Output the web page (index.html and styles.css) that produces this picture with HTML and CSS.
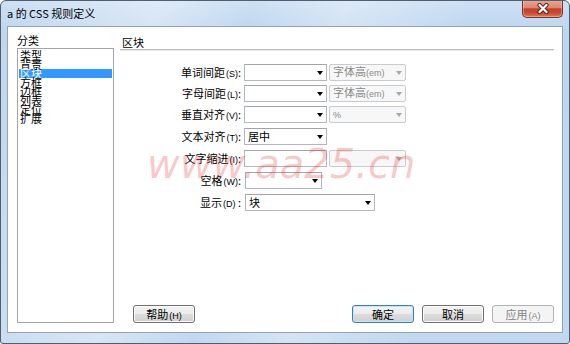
FILE: index.html
```html
<!DOCTYPE html>
<html lang="zh-CN">
<head>
<meta charset="utf-8">
<title>a 的 CSS 规则定义</title>
<link rel="stylesheet" href="styles.css">
</head>
<body>
<div class="window">
  <div class="titlebar">
    <span class="title">a 的 CSS 规则定义</span>
    <button class="close" aria-label="关闭">
      <svg width="12" height="11" viewBox="0 0 12 11"><path d="M2.5 2 L9.5 9 M9.5 2 L2.5 9" stroke="#5e2016" stroke-width="4.2" stroke-linecap="round" fill="none"/><path d="M2.5 2 L9.5 9 M9.5 2 L2.5 9" stroke="#ffffff" stroke-width="2.2" stroke-linecap="round" fill="none"/></svg>
    </button>
  </div>
  <div class="client">
    <div class="sidebar">
      <div class="side-label">分类</div>
      <ul class="category-list">
        <li>类型</li>
        <li>背景</li>
        <li class="active">区块</li>
        <li>方框</li>
        <li>边框</li>
        <li>列表</li>
        <li>定位</li>
        <li>扩展</li>
      </ul>
    </div>
    <div class="panel">
      <div class="panel-title">区块</div>
      <div class="form form-top">
        <div class="lbl">单词间距<small>(S)</small>:</div>
        <div class="fields">
          <div class="combo w83"><span class="val"></span></div>
          <div class="combo disabled w77"><span class="val">字体高<small>(em)</small></span></div>
        </div>
        <div class="lbl">字母间距<small>(L)</small>:</div>
        <div class="fields">
          <div class="combo w83"><span class="val"></span></div>
          <div class="combo disabled w77"><span class="val">字体高<small>(em)</small></span></div>
        </div>
        <div class="lbl">垂直对齐<small>(V)</small>:</div>
        <div class="fields">
          <div class="combo w83"><span class="val"></span></div>
          <div class="combo disabled w77"><span class="val"><small>%</small></span></div>
        </div>
      </div>
      <div class="form form-bottom">
        <div class="lbl">文本对齐<small>(T)</small>:</div>
        <div class="fields">
          <div class="combo w83"><span class="val">居中</span></div>
        </div>
        <div class="lbl">文字缩进<small>(I)</small>:</div>
        <div class="fields">
          <div class="textbox w83"></div>
          <div class="combo disabled w77"><span class="val"></span></div>
        </div>
        <div class="lbl">空格<small>(W)</small>:</div>
        <div class="fields">
          <div class="combo w77 shift"><span class="val"></span></div>
        </div>
        <div class="lbl">显示<small>(D)</small> :</div>
        <div class="fields">
          <div class="combo w130 shift"><span class="val">块</span></div>
        </div>
      </div>
      <div class="buttons">
        <button class="btn">帮助<small>(H)</small></button>
        <div class="btn-group">
          <button class="btn default">确定</button>
          <button class="btn">取消</button>
          <button class="btn" disabled>应用<small>(A)</small></button>
        </div>
      </div>
    </div>
  </div>
  <div class="watermark">www.aa25.cn</div>
</div>
</body>
</html>
```

FILE: styles.css
```css
* { box-sizing: border-box; }

html, body {
  margin: 0;
  padding: 0;
  background: #ffffff;
}

body {
  font-family: "Noto Sans CJK SC", "Liberation Sans", sans-serif;
  font-size: 11px;
  color: #000;
}

small {
  font-family: "Liberation Sans", "Noto Sans CJK SC", sans-serif;
  font-size: 9px;
  margin-left: 1px;
}

.window {
  position: relative;
  width: 570px;
  height: 344px;
  border: 1px solid #4f5e70;
  border-radius: 6px 6px 3px 3px;
  padding: 0 6px 10px;
  display: flex;
  flex-direction: column;
  overflow: hidden;
  background:
    linear-gradient(100deg, rgba(255,255,255,0) 0%, rgba(255,255,255,0.35) 25%, rgba(255,255,255,0) 40%, rgba(255,255,255,0.3) 55%, rgba(255,255,255,0) 75%),
    linear-gradient(#cde0f4, #bfd6ef 30px, #c2d8ef);
}

.titlebar {
  height: 25px;
  display: flex;
  justify-content: space-between;
  align-items: flex-start;
  flex: none;
}

.title {
  line-height: 25px;
  font-size: 11px;
  color: #000;
}

.close {
  width: 41px;
  height: 18px;
  margin-top: -1px;
  padding: 0;
  border: 1px solid #7a3326;
  border-top: none;
  border-radius: 0 0 5px 5px;
  background: linear-gradient(#eaa898, #dc8672 45%, #c6402a 52%, #c84830 75%, #dc7b60);
  box-shadow: inset 0 0 0 1px rgba(255,255,255,0.3);
  display: flex;
  align-items: center;
  justify-content: center;
}

.close svg { display: block; }

.client {
  height: 307px;
  flex: none;
  background: #fff;
  border: 1px solid #8fa3b9;
  display: flex;
  padding-right: 8px;
}

.sidebar {
  width: 106px;
  padding: 6px 0 9px 9px;
  display: flex;
  flex-direction: column;
}

.side-label {
  line-height: 14px;
  height: 15px;
}

.category-list {
  flex: 1;
  list-style: none;
  margin: 0;
  padding: 2px 1px 0;
  border: 1px solid #a2a6ac;
}

.category-list li {
  height: 9px;
  line-height: 9px;
  padding-left: 1px;
  white-space: nowrap;
}

.category-list li.active {
  background: #3399ff;
  color: #fff;
}

.panel {
  flex: 1;
  margin-left: 6px;
  padding: 9px 0 9px;
  display: flex;
  flex-direction: column;
}

.panel-title {
  line-height: 13px;
  height: 14px;
  padding-left: 2px;
  border-bottom: 1px solid #bdbdbd;
  box-shadow: 0 1px 0 #e8e8e8;
}

.form {
  display: grid;
  grid-template-columns: 121px auto;
  column-gap: 3px;
  grid-auto-rows: 17px;
}

.form-top {
  margin-top: 14px;
  row-gap: 4px;
}

.form-bottom {
  margin-top: 5px;
  row-gap: 5px;
}

.lbl {
  text-align: right;
  line-height: 17px;
  white-space: nowrap;
}

.fields {
  display: flex;
  gap: 2px;
}

.combo, .textbox {
  height: 17px;
  background: #fff;
  border: 1px solid #b3b6bc;
  border-top-color: #a1a5ab;
  display: flex;
  align-items: center;
  padding: 0 3px 0 3px;
}

.combo .val {
  flex: 1;
  line-height: 15px;
  white-space: nowrap;
  overflow: hidden;
}

.combo .val small { margin-left: 0; }

.combo::after {
  content: "";
  flex: none;
  width: 0;
  height: 0;
  border-left: 3.5px solid transparent;
  border-right: 3.5px solid transparent;
  border-top: 4px solid #000;
}

.combo.disabled {
  background: #f7f7f7;
  border: 1px solid #c8cbd0;
  border-radius: 2px;
  color: #8a8a8a;
}

.combo.disabled::after {
  border-top-color: #a8a8a8;
}

.w83 { width: 83px; }
.w77 { width: 77px; }
.w130 { width: 130px; }
.shift { margin-left: 1px; }

.buttons {
  margin-top: auto;
  display: flex;
  justify-content: space-between;
  padding-left: 13px;
}

.btn-group {
  display: flex;
  gap: 8px;
}

.btn {
  width: 62px;
  height: 18px;
  padding: 0;
  font-family: "Noto Sans CJK SC", "Liberation Sans", sans-serif;
  font-size: 11px;
  line-height: 16px;
  color: #000;
  border: 1px solid #707070;
  border-radius: 3px;
  background: linear-gradient(#f4f4f4, #ebebeb 48%, #dddddd 52%, #d0d0d0);
  box-shadow: inset 0 0 0 1px #fbfbfb;
}

.btn.default {
  border-color: #3c7fb1;
  box-shadow: inset 0 0 0 1px #c4e5f6;
}

.btn:disabled {
  border-color: #adb2b5;
  background: #f4f4f4;
  color: #838383;
  box-shadow: none;
}

.watermark {
  position: absolute;
  left: 146px;
  top: 143px;
  font-family: "DejaVu Sans", sans-serif;
  font-style: oblique;
  font-size: 40px;
  line-height: 40px;
  color: rgba(232, 40, 40, 0.25);
  pointer-events: none;
  white-space: nowrap;
}
```
